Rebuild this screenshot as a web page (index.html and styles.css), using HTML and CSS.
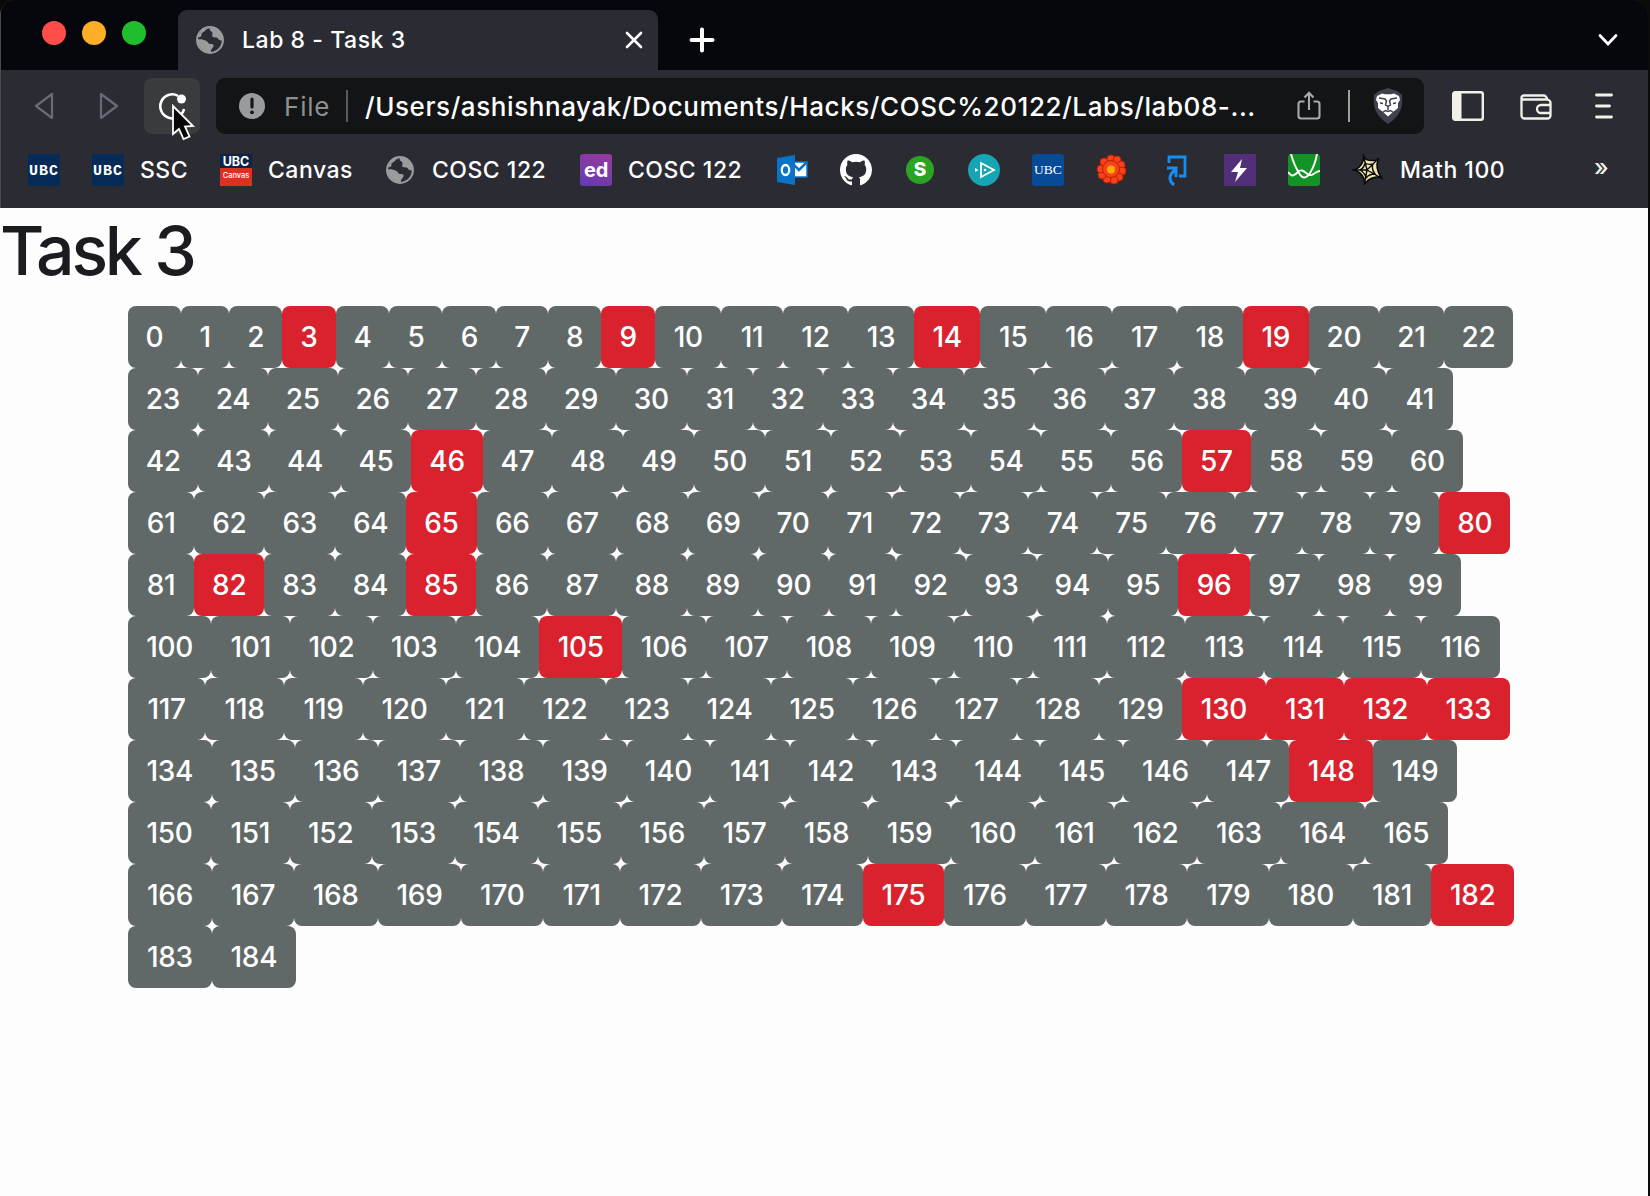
FILE: index.html
```html
<!DOCTYPE html>
<html lang="en">
<head>
<meta charset="utf-8">
<title>Lab 8 - Task 3</title>
<link rel="stylesheet" href="styles.css">
</head>
<body>
<svg class="defs" width="0" height="0">
  <symbol id="globe" viewBox="0 0 28 28">
    <circle cx="14" cy="14" r="12.9" fill="none" stroke="#999b9d" stroke-width="2.1"/>
    <path d="M14 1.500c-1 3 1 3.600 2 4.500 1.500 1.500-1 3.500 1 5 2 1 4-.5 5 1.500.5 1.500 2 2 4.500 2C27 7 21 1 14 1.500zM1.500 13.500c3-.5 6 0 9 1.500 2 1 1.500 3 4 3 3.500 0 4 2 2 4-1.500 1.500-2 3-1.500 4.500C8 27 1.500 21 1.500 13.500zM5.500 7.500C8 5 9 6 9.500 4L13 2C7 2 4 6 2 11c2 1 4-1 3.500-3.500z" fill="#999b9d"/>
  </symbol>
</svg>
<div class="window">
  <div class="chrome">
  <header class="tabs">
    <div class="lights"><i class="light red"></i><i class="light amber"></i><i class="light green"></i></div>
    <div class="tab">
      <svg width="28" height="28"><use href="#globe"/></svg>
      <span class="tab-title">Lab 8 - Task 3</span>
      <svg class="close" width="18" height="18" viewBox="0 0 18 18"><path d="M2 2l14 14M16 2L2 16" stroke="#fff" stroke-width="2.600" stroke-linecap="round"/></svg>
    </div>
    <svg class="plus" width="26" height="26" viewBox="0 0 26 26"><path d="M13 2.500v21M2.500 13h21" stroke="#fff" stroke-width="4" stroke-linecap="round"/></svg>
    <svg class="chevron" width="20" height="14" viewBox="0 0 20 14"><path d="M2 2.500l8 8.500 8-8.500" fill="none" stroke="#fff" stroke-width="2.800" stroke-linecap="round"/></svg>
  </header>
  <div class="toolbar">
    <svg class="back" width="20" height="28" viewBox="0 0 20 28"><path d="M18 2v24L2 14z" fill="none" stroke="#686a78" stroke-width="2.200" stroke-linejoin="round"/></svg>
    <svg class="forward" width="20" height="28" viewBox="0 0 20 28"><path d="M2 2v24L18 14z" fill="none" stroke="#686a78" stroke-width="2.200" stroke-linejoin="round"/></svg>
    <div class="reload">
      <svg width="30" height="28" viewBox="0 0 30 28"><path d="M20 3.800A12 12 0 1 0 26 17" fill="none" stroke="#fff" stroke-width="2.600"/><circle cx="23.500" cy="7" r="4.500" fill="#fff"/></svg>
      <svg class="cursor" width="26" height="38" viewBox="0 0 26 38"><path d="M2 3v28l6-5 4.500 10 6-2.500L14 23.500l8-.5z" fill="#080808" stroke="#fff" stroke-width="1.800"/></svg>
    </div>
    <div class="address">
      <svg width="26" height="26" viewBox="0 0 26 26"><circle cx="13" cy="13" r="13" fill="#999b9d"/><path d="M13 6v8" stroke="#17181b" stroke-width="3.200" stroke-linecap="round"/><circle cx="13" cy="19.300" r="1.900" fill="#17181b"/></svg>
      <span class="scheme">File</span><i class="rule"></i>
      <span class="url">/Users/ashishnayak/Documents/Hacks/COSC%20122/Labs/lab08-...</span>
      <svg class="share" width="24" height="30" viewBox="0 0 24 30"><path d="M7.500 10.500H4a2.500 2.500 0 0 0-2.500 2.500v12A2.500 2.500 0 0 0 4 27.500h16a2.500 2.500 0 0 0 2.500-2.500V13a2.500 2.500 0 0 0-2.500-2.500h-3.500M12 19V2M7.500 6.500L12 1.800l4.500 4.700" fill="none" stroke="#aaa" stroke-width="2.100"/></svg>
      <i class="rule light-rule"></i>
      <svg class="brave" width="30" height="36" viewBox="0 0 30 36">
        <path d="M6 3L15 0l9 3 5 4c1 12-1 20-14 29C2 27 0 19 1 7z" fill="#40414e"/>
        <path d="M9 5.500l3 .8h6l3-.8 5 2.500 1 4-2 3v5l-5 4-5 4.500-5-4.500-5-4v-5l-2-3 1-4z" fill="#fff"/>
        <path d="M6 10l6 1 1.500 2-1 4 2.500 1.500 2.500-1.500-1-4 1.500-2 6-1M15 19v3M9.500 24.500l3-2 2.500 1 2.500-1 3 2M7 15l3 .5M23 15l-3 .5" fill="none" stroke="#40414e" stroke-width="1.500"/>
      </svg>
    </div>
    <svg class="sidebar" width="32" height="30" viewBox="0 0 32 30"><rect x="1.200" y="1.200" width="29.600" height="27.600" rx="2" fill="none" stroke="#f1f1e9" stroke-width="2.400"/><path d="M1 1h8.500v28H1z" fill="#f1f1e9"/></svg>
    <svg class="wallet" width="32" height="26" viewBox="0 0 32 26"><path d="M1.500 4v17.500A3 3 0 0 0 4.500 24.500h23a3 3 0 0 0 3-3V9c0-2-1-3-3-3.500H4c-1.500 0-2.500-.5-2.500-2 0-1 1-2 2.500-2h20c1.500 0 2.500 1.500 3.500 4M30.500 11H21a4 4 0 0 0 0 8h9.500" fill="none" stroke="#f1f1e9" stroke-width="2.300"/></svg>
    <svg class="menu" width="18" height="26" viewBox="0 0 18 26"><path d="M1.500 2h15M1.500 13h13M1.500 24h15" stroke="#f1f1e9" stroke-width="2.800" stroke-linecap="round"/></svg>
  </div>
  <nav class="bookmarks">
    <a class="bm w64"><b class="ubc">UBC</b></a>
    <a class="bm w128"><b class="ubc">UBC</b><span>SSC</span></a>
    <a class="bm w164"><b class="canvas-logo"><span>UBC</span><small>Canvas</small></b><span>Canvas</span></a>
    <a class="bm w196"><svg class="site" width="28" height="28"><use href="#globe"/></svg><span>COSC 122</span></a>
    <a class="bm w196"><b class="ed">ed</b><span>COSC 122</span></a>
    <a class="bm w64"><svg width="32" height="32" viewBox="0 0 32 32"><path d="M18 8h13v15H18z" fill="#fff" stroke="#0873c7" stroke-width="1.500"/><path d="M18 11l5 5 8-8" fill="none" stroke="#0873c7" stroke-width="2.500"/><path d="M1 4l18-3v30L1 28z" fill="#0873c7"/><ellipse cx="9.500" cy="16" rx="3.700" ry="5" fill="none" stroke="#fff" stroke-width="2.300"/></svg></a>
    <a class="bm w64"><svg width="32" height="32" viewBox="0 0 16 16"><path fill="#fff" d="M8 0C3.580 0 0 3.580 0 8c0 3.540 2.290 6.530 5.470 7.590.4.070.55-.17.55-.38 0-.19-.01-.82-.01-1.490-2.010.37-2.530-.49-2.690-.94-.09-.23-.48-.94-.82-1.130-.28-.15-.68-.52-.01-.53.63-.01 1.080.58 1.230.82.72 1.210 1.870.87 2.330.66.070-.52.28-.87.51-1.070-1.780-.2-3.640-.89-3.640-3.950 0-.87.31-1.590.82-2.150-.08-.2-.36-1.020.08-2.120 0 0 .67-.21 2.200.82.64-.18 1.320-.27 2-.27s1.360.09 2 .27c1.530-1.040 2.200-.82 2.200-.82.44 1.100.16 1.920.08 2.120.51.56.82 1.270.82 2.150 0 3.070-1.870 3.750-3.650 3.950.29.25.54.73.54 1.480 0 1.070-.01 1.930-.01 2.200 0 .21.15.46.55.38A8.010 8.010 0 0 0 16 8c0-4.420-3.580-8-8-8z"/></svg></a>
    <a class="bm w64"><b class="s-logo">S</b></a>
    <a class="bm w64"><svg width="32" height="32" viewBox="0 0 32 32"><circle cx="16" cy="16" r="16" fill="#16a5b5"/><path d="M13 9l13 7-13 7z" fill="none" stroke="#fff" stroke-width="1.800"/><path d="M7 14l3.500 2L7 18z" fill="#fff"/><circle cx="17" cy="16" r="1.300" fill="#fff"/></svg></a>
    <a class="bm w64"><b class="ubc-serif">UBC</b></a>
    <a class="bm w64"><svg width="32" height="32" viewBox="0 0 32 32"><circle cx="16.500" cy="16.500" r="13.500" fill="#7c1608"/><g fill="#f8421a" stroke="#b92206" stroke-width="1"><circle cx="15" cy="5" r="4"/><circle cx="21" cy="6" r="4"/><circle cx="25" cy="11" r="4"/><circle cx="26" cy="17" r="4"/><circle cx="23" cy="23" r="4"/><circle cx="18" cy="26" r="4"/><circle cx="11" cy="25" r="4"/><circle cx="6" cy="21" r="4"/><circle cx="5" cy="15" r="4"/><circle cx="8" cy="8" r="4"/><circle cx="15" cy="15" r="8.500"/></g><circle cx="15" cy="15.500" r="4" fill="#ffad0c"/></svg></a>
    <a class="bm w64"><svg width="32" height="32" viewBox="0 0 32 32"><path d="M9 9V3h16v19h-6" fill="none" stroke="#168df0" stroke-width="2.800"/><path d="M14 31c-6-5-5-10 1-15M7 14h9v9" fill="none" stroke="#168df0" stroke-width="3"/></svg></a>
    <a class="bm w64"><svg width="32" height="32" viewBox="0 0 32 32"><path d="M0 0h32v32H0z" fill="#523079"/><path d="M18 5L7 18h7l-3 10 12-14h-7z" fill="#fff"/></svg></a>
    <a class="bm w64"><svg width="32" height="32" viewBox="0 0 32 32"><rect width="32" height="32" rx="3" fill="#129326"/><path d="M3 0q3 11 8 19Q16 28 22 19 27 11 29 0M0 18c4 6 7 3 10 0 5-5 8 3 12 3 4 1 5-4 10-4" fill="none" stroke="#fff" stroke-width="1.900"/></svg></a>
    <a class="bm math"><svg width="32" height="32" viewBox="0 0 32 32"><path d="M12 3q2 5 14 3-3 8 3 17-9-1-16 6-1-9-10-13 8-4 9-13z" fill="#efe7ad" stroke="#080808" stroke-width="1.600"/><path d="M11 0l4 16L27 4M15 16l16 9M15 16l-3 15M15 16H0M13 9q3 2 8 1-2 5 2 10-6 0-9 4-1-5-6-8 4-2 5-7z" fill="none" stroke="#080808" stroke-width="1.400"/></svg><span>Math 100</span></a>
    <span class="more">»</span>
  </nav>
  </div>
  <main class="page">
    <h1 class="heading">Task 3</h1>
    <div class="board" id="board"></div>
  </main>
</div>
<script src="board.js"></script>
</body>
</html>
```
FILE: styles.css
```css
* { box-sizing: border-box; }
body { margin: 0; background: #0b0b0c; font-family: Inter, "Liberation Sans", sans-serif; overflow: hidden; }
svg { display: block; flex: none; }
i { flex: none; }
.defs { position: absolute; }
.window { width: 1648px; height: 1196px; border-radius: 15px 15px 0 0; overflow: hidden; }
.chrome { background: #2b2c33; border-left: 1px solid #4a4b52; }
.tabs { height: 70px; background: #06060d; display: flex; align-items: flex-start; border-radius: 14px 14px 0 0; }
.lights { display: flex; gap: 16px; padding: 21px 0 0 41px; width: 177px; }
.light { width: 24px; height: 24px; border-radius: 50%; }
.red { background: #ff4e49; }
.amber { background: #ffae27; }
.green { background: #20bd2d; }
.tab { width: 480px; height: 60px; margin-top: 10px; padding: 0 15px 0 18px; display: flex; align-items: center; background: #2b2c33; border-radius: 9px 9px 0 0; }
.tab-title { margin-left: 18px; flex: 1; font-size: 23px; font-weight: 550; color: #fff; white-space: nowrap; letter-spacing: .55px; }
.plus { margin: 27px 0 0 31px; }
.chevron { margin: 33px 30px 0 auto; }
.toolbar { height: 72px; padding-top: 8px; display: flex; align-items: flex-start; }
.back { margin: 14px 0 0 33px; }
.forward { margin: 14px 0 0 45px; }
.reload { position: relative; width: 56px; height: 56px; margin-left: 25px; border-radius: 8px; background: #393b3d; padding: 14px 0 0 14px; }
.cursor { position: absolute; left: 27px; top: 25px; }
.address { margin-left: 16px; width: 1208px; height: 56px; padding-left: 23px; border-radius: 9px; background: #131416; display: flex; align-items: center; white-space: nowrap; }
.scheme { width: 62px; margin-left: 19px; font-size: 26px; color: #8e8f8e; letter-spacing: .8px; }
.rule { width: 2px; height: 32px; background: #5a5b5b; }
.light-rule { margin-left: 27px; background: #a0a09d; }
.url { margin-left: 17px; width: 932px; font-size: 26px; font-weight: 450; color: #fff; letter-spacing: .58px; }
.brave { margin-left: 23px; }
.sidebar { margin: 13px 0 0 28px; }
.wallet { margin: 16px 0 0 36px; }
.menu { margin: 15px 0 0 43px; }
.bookmarks { height: 66px; padding: 12px 0 0 27px; display: flex; align-items: flex-start; }
.bm { display: flex; align-items: center; gap: 16px; height: 32px; flex: none; font-size: 23px; font-weight: 450; letter-spacing: .5px; color: #fff; white-space: nowrap; }
.bm b { flex: none; width: 32px; height: 32px; text-align: center; }
.bm .site { margin: 0 2px; }
.w64 { width: 64px; }
.w128 { width: 128px; }
.w164 { width: 164px; }
.w196 { width: 196px; }
.math { width: 215px; }
.bm .ubc { background: #062b58; color: #fff; font: 700 15px/36px "Liberation Mono", monospace; letter-spacing: 1px; }
.canvas-logo { display: flex; flex-direction: column; background: #dd3020; line-height: 1; letter-spacing: 0; }
.canvas-logo span { height: 14px; background: #0b2447; font: 700 12.5px/15px Inter, sans-serif; }
.canvas-logo small { font-size: 7.500px; line-height: 16px; font-weight: 500; }
.bm .ed { border-radius: 3px; background: linear-gradient(20deg, #633ab2, #973b9d); font-size: 20px; line-height: 33px; letter-spacing: -.2px; }
.bm .s-logo { width: 28px; height: 28px; margin: 0 2px; border-radius: 50%; background: #2ba323; font-size: 19px; font-weight: 800; line-height: 28px; letter-spacing: 0; }
.bm .ubc-serif { border-radius: 3px; background: #074b98; font: 13.5px/32px "Liberation Serif", serif; letter-spacing: 0; }
.more { margin-left: 27px; line-height: 28px; font-size: 24px; font-weight: 500; color: #f1f1e9; }
.page { height: 988px; background: #fdfdfd; }
.heading { margin: 0; height: 98px; padding-top: 2px; font-size: 68px; line-height: 80px; font-weight: 550; color: #1b1c20; letter-spacing: -3.3px; }
.board { margin-left: 128px; }
.row { display: flex; height: 62px; }
.cell { display: flex; align-items: center; justify-content: center; min-width: 0; height: 62px; border-radius: 8px; background: #616968; color: #fff; font-size: 28px; font-weight: 450; white-space: nowrap; letter-spacing: -.3px; }
.hit { background: #d9222e; }
```
FILE: board.js
```js
// Advance width of each digit, and the padding on both sides of a number.
const ADVANCE = [17.8, 13.2, 16.9, 17.6, 18, 17.3, 18, 15.9, 17.7, 17.9];
const PADDING = 35.4;
const HITS = new Set([3, 9, 14, 19, 46, 57, 65, 80, 82, 85, 96, 105, 130, 131, 132, 133, 148, 175, 182]);
// First number, last number, width of each row.
const ROWS = [
  [0, 22, 1385], [23, 41, 1325], [42, 60, 1335], [61, 80, 1382], [81, 99, 1333], [100, 116, 1372],
  [117, 133, 1382], [134, 149, 1329], [150, 165, 1320], [166, 182, 1386], [183, 184, 168]
];
const board = document.getElementById('board');
for (const [first, last, width] of ROWS) {
  const row = document.createElement('div');
  row.className = 'row';
  row.style.width = width + 'px';
  for (let n = first; n <= last; n++) {
    const cell = document.createElement('span');
    cell.className = HITS.has(n) ? 'cell hit' : 'cell';
    cell.textContent = n;
    let basis = [...String(n)].reduce((sum, d) => sum + ADVANCE[d], PADDING);
    if (n > 1 && n < 10) basis += 0.6;
    if (n === 174) basis -= 1.5;
    cell.style.flex = `1 1 ${basis}px`;
    row.append(cell);
  }
  board.append(row);
}
```
